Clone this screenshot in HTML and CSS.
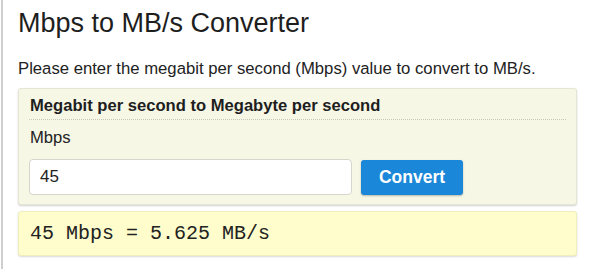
FILE: index.html
```html
<!DOCTYPE html>
<html>
<head>
<meta charset="utf-8">
<link rel="stylesheet" href="styles.css">
</head>
<body>
<div class="page">
  <h1 class="title">Mbps to MB/s Converter</h1>
  <p class="intro">Please enter the megabit per second (Mbps) value to convert to MB/s.</p>
  <div class="panel">
    <div class="panel-head">Megabit per second to Megabyte per second</div>
    <label class="label" for="mbps">Mbps</label>
    <div class="row">
      <input class="field" id="mbps" type="text" value="45">
      <button class="btn">Convert</button>
    </div>
  </div>
  <div class="result">45 Mbps = 5.625 MB/s</div>
</div>
</body>
</html>
```
FILE: styles.css
```css
html, body {
  margin: 0;
  padding: 0;
  background: #ffffff;
}
.page {
  margin-left: 1px;
  border-left: 2px solid #cfcfcf;
  padding: 7px 0 20px 15px;
  width: 559px;
  font-family: "Liberation Sans", Arial, sans-serif;
  color: #222;
}
.title {
  margin: 0;
  font-size: 27px;
  line-height: 32px;
  font-weight: normal;
  color: #1e1e1e;
}
.intro {
  margin: 20px 0 0 0;
  font-size: 16.7px;
  line-height: 20px;
  color: #222;
}
.panel {
  margin-top: 9px;
  background: #f7f7e6;
  border: 1px solid #e6e6d4;
  border-radius: 3px;
  box-shadow: 0 1px 2px rgba(0,0,0,0.18);
  padding: 7px 10px 9px 10px;
}
.panel-head {
  font-size: 16.6px;
  line-height: 20px;
  font-weight: bold;
  color: #1e1e1e;
  padding: 0 0 3px 1px;
  border-bottom: 1px dotted #c8c8b8;
}
.label {
  display: block;
  margin-top: 7.5px;
  font-size: 16.6px;
  line-height: 20px;
  color: #222;
  padding-left: 1px;
}
.row {
  display: flex;
  align-items: center;
  gap: 9px;
  margin-top: 11.5px;
}
.field {
  box-sizing: border-box;
  width: 323px;
  height: 36px;
  margin: 0;
  padding: 0 10px;
  border: 1px solid #d6d6cc;
  border-radius: 4px;
  background: #ffffff;
  font-family: "Liberation Sans", Arial, sans-serif;
  font-size: 17px;
  color: #222;
  outline: none;
}
.btn {
  box-sizing: border-box;
  width: 102px;
  height: 35px;
  margin: 0;
  border: none;
  border-radius: 3px;
  background: #1b87d8;
  box-shadow: 0 1px 2px rgba(0,0,0,0.25);
  color: #ffffff;
  font-family: "Liberation Sans", Arial, sans-serif;
  font-size: 17.5px;
  font-weight: bold;
  padding: 0;
}
.result {
  margin-top: 6px;
  background: #fefdcb;
  border: 1px solid #efeebc;
  border-radius: 3px;
  box-shadow: 0 1px 2px rgba(0,0,0,0.15);
  padding: 9.5px 11px;
  font-family: "Liberation Mono", "Courier New", monospace;
  font-size: 20px;
  line-height: 24px;
  color: #222;
}
```
